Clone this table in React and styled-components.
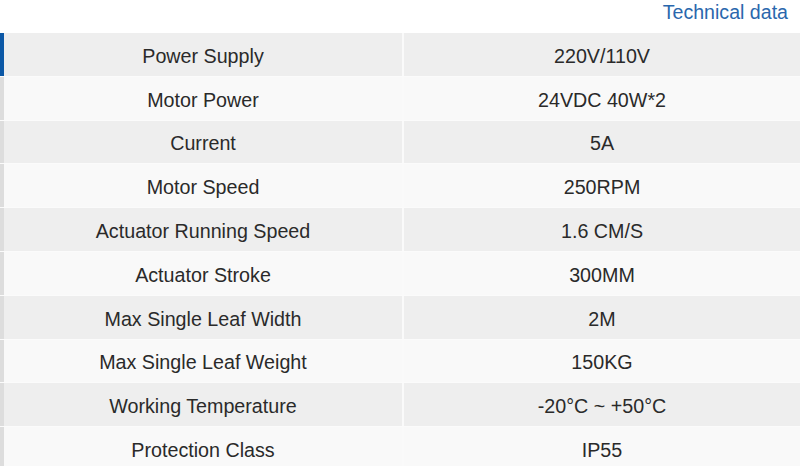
import React from "react";
import styled, { createGlobalStyle } from "styled-components";

const GlobalStyle = createGlobalStyle`
  html, body {
    margin: 0;
    padding: 0;
    background: #ffffff;
    overflow: hidden;
  }
  body {
    font-family: "Liberation Sans", Arial, sans-serif;
  }
`;

const Page = styled.div`
  width: 800px;
  height: 466px;
  overflow: hidden;
  background: #ffffff;
`;

const Header = styled.div`
  height: 33px;
  display: flex;
  justify-content: flex-end;
  align-items: center;
  padding-right: 12px;
  box-sizing: border-box;
`;

const Title = styled.h2`
  margin: 0;
  margin-top: -9px;
  font-size: 19.6px;
  font-weight: normal;
  color: #2a67ad;
`;

const Table = styled.div`
  display: flex;
  flex-direction: column;
`;

const Row = styled.div`
  display: grid;
  grid-template-columns: 4px 398px 1fr;
  height: 43.8px;
  background: ${(p) => (p.odd ? "#eeeeee" : "#f9f9f9")};
  border-bottom: 1px solid #fbfbfb;
  box-sizing: border-box;
`;

const Marker = styled.div`
  background: ${(p) => (p.active ? "#0c58a6" : "#dddddd")};
`;

const Cell = styled.div`
  display: flex;
  align-items: center;
  justify-content: center;
  padding-top: 4px;
  font-size: 19.7px;
  color: #2a2a2a;
  border-left: ${(p) => (p.divided ? "2px solid #fafafa" : "none")};
`;

const specs = [
  ["Power Supply", "220V/110V"],
  ["Motor Power", "24VDC 40W*2"],
  ["Current", "5A"],
  ["Motor Speed", "250RPM"],
  ["Actuator Running Speed", "1.6 CM/S"],
  ["Actuator Stroke", "300MM"],
  ["Max Single Leaf Width", "2M"],
  ["Max Single Leaf Weight", "150KG"],
  ["Working Temperature", "-20°C ~ +50°C"],
  ["Protection Class", "IP55"],
];

const App = () => {
  return (
    <Page>
      <GlobalStyle />
      <Header>
        <Title>Technical data</Title>
      </Header>
      <Table>
        {specs.map(([label, value], i) => (
          <Row key={label} odd={i % 2 === 0}>
            <Marker active={i === 0} />
            <Cell>{label}</Cell>
            <Cell divided>{value}</Cell>
          </Row>
        ))}
      </Table>
    </Page>
  );
};

export default App;
